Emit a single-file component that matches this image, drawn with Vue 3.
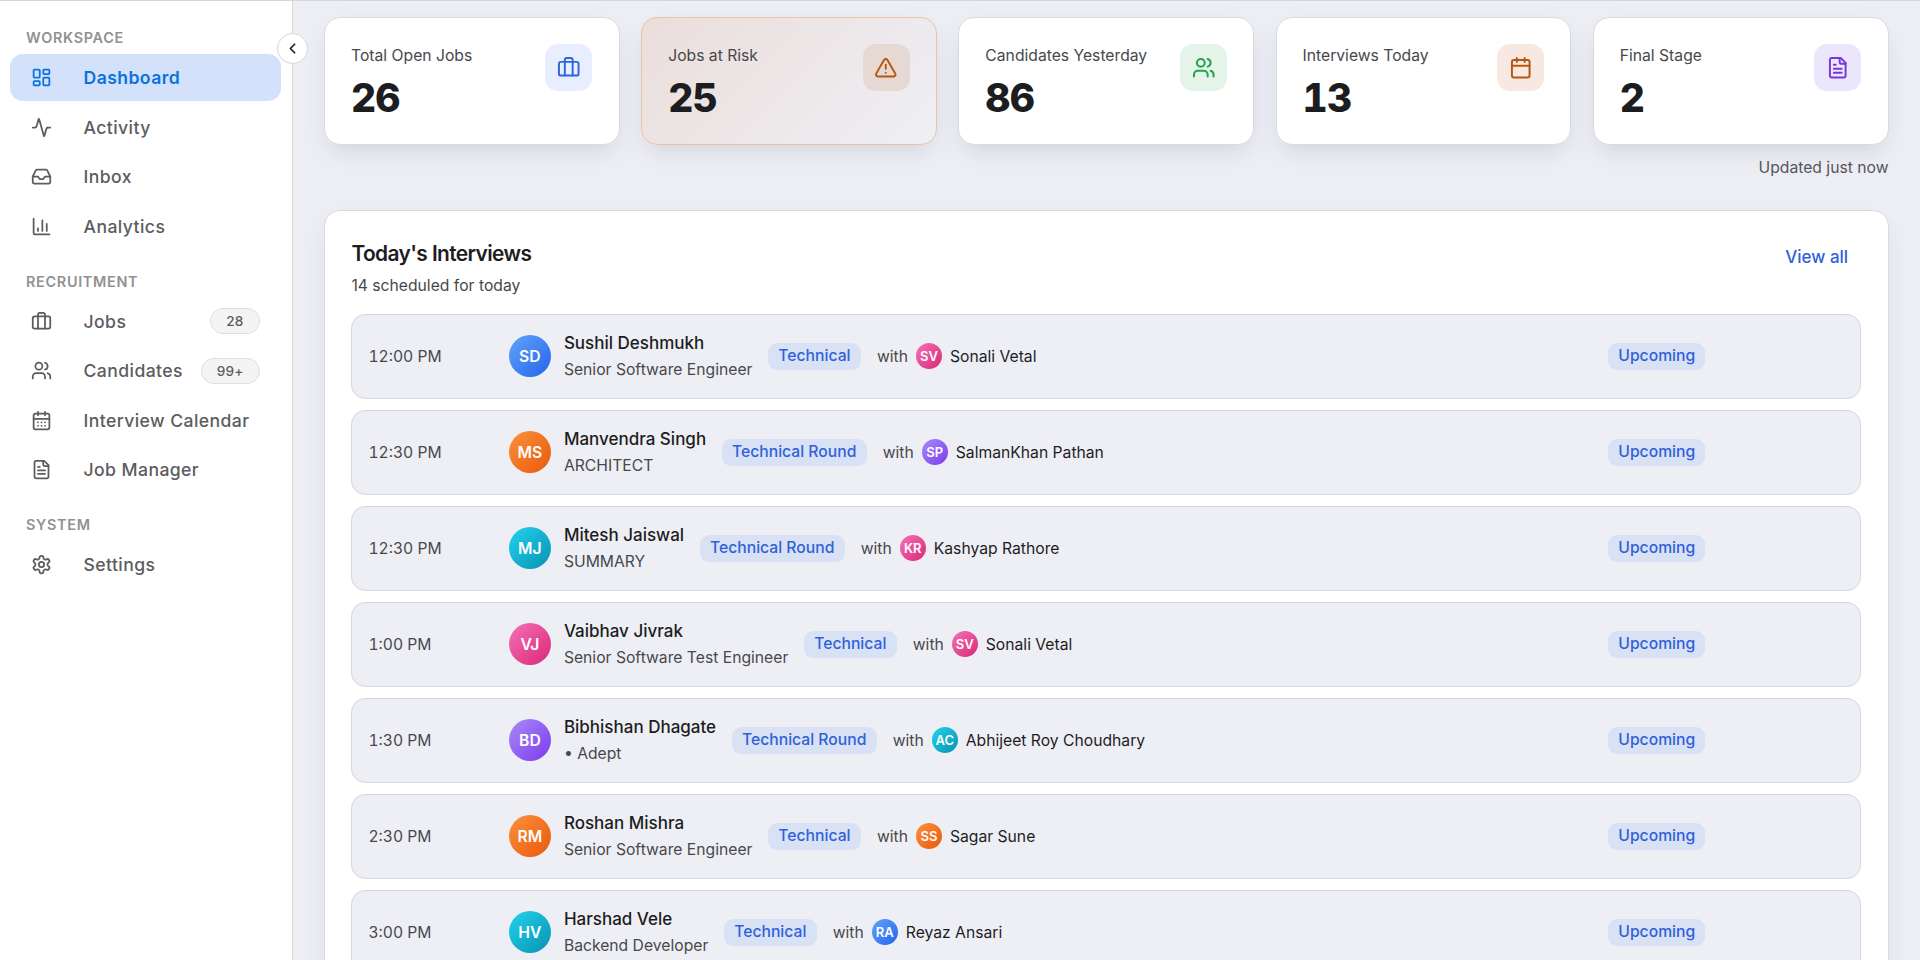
<template>
  <div class="app">
    <!-- Sidebar -->
    <aside class="sidebar">
      <nav>
        <section v-for="group in navGroups" :key="group.title" class="nav-group">
          <h3 class="nav-title">{{ group.title }}</h3>
          <a
            v-for="item in group.items"
            :key="item.label"
            class="nav-item"
            :class="{ active: item.active }"
          >
            <svg class="nav-icon" viewBox="0 0 24 24">
              <path v-for="d in icons[item.icon]" :key="d" :d="d" />
            </svg>
            <span class="nav-label">{{ item.label }}</span>
            <span v-if="item.count" class="nav-count">{{ item.count }}</span>
          </a>
        </section>
      </nav>
      <button class="collapse-btn">
        <svg viewBox="0 0 24 24"><path d="m15 18-6-6 6-6" /></svg>
      </button>
    </aside>

    <!-- Main content -->
    <main class="content">
      <div class="stats">
        <div
          v-for="stat in stats"
          :key="stat.label"
          class="stat-card"
          :class="{ risk: stat.risk }"
        >
          <div>
            <div class="stat-label">{{ stat.label }}</div>
            <div class="stat-value">{{ stat.value }}</div>
          </div>
          <div class="stat-icon" :class="stat.color">
            <svg viewBox="0 0 24 24">
              <path v-for="d in icons[stat.icon]" :key="d" :d="d" />
            </svg>
          </div>
        </div>
      </div>
      <div class="updated">Updated just now</div>

      <section class="panel">
        <header class="panel-header">
          <div>
            <h2 class="panel-title">Today's Interviews</h2>
            <p class="panel-sub">14 scheduled for today</p>
          </div>
          <a class="view-all">View all</a>
        </header>

        <div class="rows">
          <div v-for="row in interviews" :key="row.name" class="row">
            <div class="time">{{ row.time }}</div>
            <div class="details">
              <div class="avatar" :class="row.color">{{ row.initials }}</div>
              <div class="person">
                <div class="name">{{ row.name }}</div>
                <div class="role">{{ row.role }}</div>
              </div>
              <span class="tag">{{ row.round }}</span>
              <div class="with">
                <span>with</span>
                <span class="avatar small" :class="row.byColor">{{ row.byInitials }}</span>
                <span class="by-name">{{ row.by }}</span>
              </div>
            </div>
            <div class="status"><span class="tag">Upcoming</span></div>
          </div>
        </div>
      </section>
    </main>
  </div>
</template>

<script setup>
const users = [
  'M16 21v-2a4 4 0 0 0-4-4H6a4 4 0 0 0-4 4v2',
  'M5 7a4 4 0 1 0 8 0a4 4 0 1 0-8 0',
  'M22 21v-2a4 4 0 0 0-3-3.87',
  'M16 3.13a4 4 0 0 1 0 7.75',
];

const icons = {
  dashboard: [
    'M4 3h5a1 1 0 0 1 1 1v7a1 1 0 0 1-1 1H4a1 1 0 0 1-1-1V4a1 1 0 0 1 1-1z',
    'M15 3h5a1 1 0 0 1 1 1v3a1 1 0 0 1-1 1h-5a1 1 0 0 1-1-1V4a1 1 0 0 1 1-1z',
    'M15 12h5a1 1 0 0 1 1 1v7a1 1 0 0 1-1 1h-5a1 1 0 0 1-1-1v-7a1 1 0 0 1 1-1z',
    'M4 16h5a1 1 0 0 1 1 1v3a1 1 0 0 1-1 1H4a1 1 0 0 1-1-1v-3a1 1 0 0 1 1-1z',
  ],
  activity: [
    'M22 12h-2.48a2 2 0 0 0-1.93 1.46l-2.35 8.36a.25.25 0 0 1-.48 0L9.24 2.18a.25.25 0 0 0-.48 0l-2.35 8.36A2 2 0 0 1 4.49 12H2',
  ],
  inbox: [
    'M22 12h-6l-2 3h-4l-2-3H2',
    'M5.45 5.11 2 12v6a2 2 0 0 0 2 2h16a2 2 0 0 0 2-2v-6l-3.45-6.89A2 2 0 0 0 16.76 4H7.24a2 2 0 0 0-1.79 1.11z',
  ],
  chart: ['M3 3v16a2 2 0 0 0 2 2h16', 'M18 17V9', 'M13 17V5', 'M8 17v-3'],
  briefcase: [
    'M16 20V4a2 2 0 0 0-2-2h-4a2 2 0 0 0-2 2v16',
    'M4 6h16a2 2 0 0 1 2 2v10a2 2 0 0 1-2 2H4a2 2 0 0 1-2-2V8a2 2 0 0 1 2-2z',
  ],
  users,
  calendarDays: [
    'M8 2v4',
    'M16 2v4',
    'M5 4h14a2 2 0 0 1 2 2v14a2 2 0 0 1-2 2H5a2 2 0 0 1-2-2V6a2 2 0 0 1 2-2z',
    'M3 10h18',
    'M8 14h.01',
    'M12 14h.01',
    'M16 14h.01',
    'M8 18h.01',
    'M12 18h.01',
    'M16 18h.01',
  ],
  calendar: [
    'M8 2v4',
    'M16 2v4',
    'M5 4h14a2 2 0 0 1 2 2v14a2 2 0 0 1-2 2H5a2 2 0 0 1-2-2V6a2 2 0 0 1 2-2z',
    'M3 10h18',
  ],
  file: [
    'M15 2H6a2 2 0 0 0-2 2v16a2 2 0 0 0 2 2h12a2 2 0 0 0 2-2V7Z',
    'M14 2v4a2 2 0 0 0 2 2h4',
    'M10 9H8',
    'M16 13H8',
    'M16 17H8',
  ],
  alert: [
    'm21.73 18-8-14a2 2 0 0 0-3.48 0l-8 14A2 2 0 0 0 4 21h16a2 2 0 0 0 1.73-3',
    'M12 9v4',
    'M12 17h.01',
  ],
  settings: [
    'M12.22 2h-.44a2 2 0 0 0-2 2v.18a2 2 0 0 1-1 1.73l-.43.25a2 2 0 0 1-2 0l-.15-.08a2 2 0 0 0-2.73.73l-.22.38a2 2 0 0 0 .73 2.73l.15.1a2 2 0 0 1 1 1.72v.51a2 2 0 0 1-1 1.74l-.15.09a2 2 0 0 0-.73 2.73l.22.38a2 2 0 0 0 2.73.73l.15-.08a2 2 0 0 1 2 0l.43.25a2 2 0 0 1 1 1.73V20a2 2 0 0 0 2 2h.44a2 2 0 0 0 2-2v-.18a2 2 0 0 1 1-1.73l.43-.25a2 2 0 0 1 2 0l.15.08a2 2 0 0 0 2.73-.73l.22-.39a2 2 0 0 0-.73-2.73l-.15-.08a2 2 0 0 1-1-1.74v-.5a2 2 0 0 1 1-1.74l.15-.09a2 2 0 0 0 .73-2.73l-.22-.38a2 2 0 0 0-2.73-.73l-.15.08a2 2 0 0 1-2 0l-.43-.25a2 2 0 0 1-1-1.73V4a2 2 0 0 0-2-2z',
    'M9 12a3 3 0 1 0 6 0a3 3 0 1 0-6 0',
  ],
};

const navGroups = [
  {
    title: 'WORKSPACE',
    items: [
      { label: 'Dashboard', icon: 'dashboard', active: true },
      { label: 'Activity', icon: 'activity' },
      { label: 'Inbox', icon: 'inbox' },
      { label: 'Analytics', icon: 'chart' },
    ],
  },
  {
    title: 'RECRUITMENT',
    items: [
      { label: 'Jobs', icon: 'briefcase', count: '28' },
      { label: 'Candidates', icon: 'users', count: '99+' },
      { label: 'Interview Calendar', icon: 'calendarDays' },
      { label: 'Job Manager', icon: 'file' },
    ],
  },
  {
    title: 'SYSTEM',
    items: [{ label: 'Settings', icon: 'settings' }],
  },
];

const stats = [
  { label: 'Total Open Jobs', value: 26, icon: 'briefcase', color: 'blue' },
  { label: 'Jobs at Risk', value: 25, icon: 'alert', color: 'amber', risk: true },
  { label: 'Candidates Yesterday', value: 86, icon: 'users', color: 'green' },
  { label: 'Interviews Today', value: 13, icon: 'calendar', color: 'amber' },
  { label: 'Final Stage', value: 2, icon: 'file', color: 'purple' },
];

const interviews = [
  { time: '12:00 PM', initials: 'SD', color: 'c-blue', name: 'Sushil Deshmukh', role: 'Senior Software Engineer', round: 'Technical', byInitials: 'SV', byColor: 'c-pink', by: 'Sonali Vetal' },
  { time: '12:30 PM', initials: 'MS', color: 'c-orange', name: 'Manvendra Singh', role: 'ARCHITECT', round: 'Technical Round', byInitials: 'SP', byColor: 'c-purple', by: 'SalmanKhan Pathan' },
  { time: '12:30 PM', initials: 'MJ', color: 'c-cyan', name: 'Mitesh Jaiswal', role: 'SUMMARY', round: 'Technical Round', byInitials: 'KR', byColor: 'c-pink', by: 'Kashyap Rathore' },
  { time: '1:00 PM', initials: 'VJ', color: 'c-pink', name: 'Vaibhav Jivrak', role: 'Senior Software Test Engineer', round: 'Technical', byInitials: 'SV', byColor: 'c-pink', by: 'Sonali Vetal' },
  { time: '1:30 PM', initials: 'BD', color: 'c-purple', name: 'Bibhishan Dhagate', role: '• Adept', round: 'Technical Round', byInitials: 'AC', byColor: 'c-cyan', by: 'Abhijeet Roy Choudhary' },
  { time: '2:30 PM', initials: 'RM', color: 'c-orange', name: 'Roshan Mishra', role: 'Senior Software Engineer', round: 'Technical', byInitials: 'SS', byColor: 'c-orange', by: 'Sagar Sune' },
  { time: '3:00 PM', initials: 'HV', color: 'c-cyan', name: 'Harshad Vele', role: 'Backend Developer', round: 'Technical', byInitials: 'RA', byColor: 'c-blue', by: 'Reyaz Ansari' },
];
</script>

<style>
body {
  margin: 0;
  overflow: hidden;
}
</style>

<style scoped>
.app {
  box-sizing: border-box;
  display: flex;
  height: 960px;
  overflow: hidden;
  border-top: 1px solid #d6d6d9;
  background: #eeeff5;
  color: #1d1d1f;
  font-family: Inter, 'Liberation Sans', sans-serif;
}

.app * {
  box-sizing: border-box;
}

svg {
  display: block;
  fill: none;
  stroke: currentColor;
  stroke-width: 2;
  stroke-linecap: round;
  stroke-linejoin: round;
}

/* Sidebar */
.sidebar {
  position: relative;
  flex: none;
  width: 292.5px;
  padding: 25px 10.5px 0 10px;
  background: #fff;
  border-right: 1px solid #d6d6db;
}

.nav-title {
  margin: 0;
  height: 28px;
  padding-left: 16px;
  font-size: 14.4px;
  line-height: 24px;
  font-weight: 600;
  letter-spacing: 0.7px;
  color: #919194;
}

.nav-group + .nav-group {
  margin-top: 19.8px;
}

.nav-item {
  display: flex;
  align-items: center;
  height: 47px;
  margin-bottom: 2.6px;
  padding: 0 21.5px 0 21px;
  border-radius: 13px;
  font-size: 17.6px;
  font-weight: 500;
  letter-spacing: 0.42px;
  color: #5c5c5f;
}

.nav-item.active {
  background: #d3e1fb;
  color: #0a72de;
  font-weight: 600;
}

.nav-icon {
  flex: none;
  width: 21px;
  height: 21px;
  margin-right: 31.5px;
}

.nav-label {
  white-space: nowrap;
}

.nav-count {
  margin-left: auto;
  padding: 0 15px;
  height: 26px;
  border: 1px solid #dedee0;
  border-radius: 13px;
  background: #f4f4f5;
  font-size: 13.6px;
  line-height: 24px;
  letter-spacing: 0.2px;
}

.collapse-btn {
  position: absolute;
  top: 31.5px;
  right: -16px;
  display: flex;
  align-items: center;
  justify-content: center;
  width: 31px;
  height: 31px;
  padding: 0;
  border: 1px solid #d6d6db;
  border-radius: 50%;
  background: #fff;
  color: #1d1d1f;
}

.collapse-btn svg {
  width: 17px;
  height: 17px;
  stroke-width: 2.4;
}

/* Stats */
.content {
  flex: 1;
  min-width: 0;
  padding: 16px 31.5px 0 31.5px;
}

.stats {
  display: grid;
  grid-template-columns: repeat(5, 1fr);
  gap: 21.4px;
}

.stat-card {
  display: flex;
  justify-content: space-between;
  height: 128px;
  padding: 26px 26.3px 0 26px;
  border: 1px solid #d9dae1;
  border-radius: 16px;
  background: #fff;
  box-shadow: 0 10px 32px rgba(30, 35, 60, 0.06), 0 12px 18px -10px rgba(30, 35, 60, 0.09);
}

.stat-card.risk {
  border-color: #ebc3a6;
  background: linear-gradient(135deg, #ebdedb, #eeeff5);
}

.stat-label {
  font-size: 15.7px;
  line-height: 24.5px;
  color: #48484b;
  white-space: nowrap;
}

.stat-value {
  margin-top: 5.5px;
  font-size: 39px;
  line-height: 47px;
  font-weight: 800;
  letter-spacing: -0.8px;
  font-variant-numeric: tabular-nums;
}

.stat-icon {
  display: flex;
  flex: none;
  align-items: center;
  justify-content: center;
  width: 47px;
  height: 47px;
  border-radius: 13px;
}

.stat-icon svg {
  width: 23.5px;
  height: 23.5px;
}

.stat-icon.blue {
  background: #e9eefe;
  color: #2f66dc;
}

.stat-icon.amber {
  background: #f7e9e1;
  color: #b65710;
}

.risk .stat-icon.amber {
  background: #e6d8d3;
}

.stat-icon.green {
  background: #e5f4e9;
  color: #1fa24a;
}

.stat-icon.purple {
  background: #ece6fd;
  color: #7738d8;
}

.updated {
  margin-top: 9.5px;
  font-size: 15.7px;
  line-height: 25px;
  text-align: right;
  color: #55555a;
}

/* Interviews */
.panel {
  margin-top: 30.5px;
  height: 860px;
  padding: 28px 26.4px;
  border: 1px solid #d9dae1;
  border-radius: 16px;
  background: #fff;
  box-shadow: 0 10px 32px rgba(30, 35, 60, 0.06);
}

.panel-header {
  display: flex;
  justify-content: space-between;
  height: 74.6px;
}

.panel-title {
  margin: 0;
  font-size: 20.9px;
  line-height: 30px;
  font-weight: 600;
  letter-spacing: -0.6px;
}

.panel-sub {
  margin: 5px 0 0;
  font-size: 15.7px;
  line-height: 24.5px;
  color: #48484b;
}

.view-all {
  margin: 6px 13px 0 0;
  font-size: 17px;
  line-height: 24px;
  font-weight: 500;
  color: #2f62d9;
}

.rows {
  display: flex;
  flex-direction: column;
  gap: 11px;
}

.row {
  display: grid;
  grid-template-columns: 140.5px 1fr 236px;
  align-items: center;
  height: 85px;
  padding: 0 16px;
  border: 1px solid #d6d8e0;
  border-radius: 14px;
  background: #eeeff5;
  white-space: nowrap;
}

.time {
  font-size: 15.7px;
  font-variant-numeric: tabular-nums;
  color: #48484b;
}

.details {
  display: flex;
  align-items: center;
}

.avatar {
  display: flex;
  flex: none;
  align-items: center;
  justify-content: center;
  width: 42px;
  height: 42px;
  border-radius: 50%;
  color: #fff;
  font-size: 15.7px;
  font-weight: 600;
}

.avatar.small {
  width: 26.4px;
  height: 26.4px;
  margin: 0 7.8px;
  font-size: 13px;
}

.c-blue {
  background: linear-gradient(135deg, #60a5fa, #2563eb);
}

.c-orange {
  background: linear-gradient(135deg, #fb923c, #ea580c);
}

.c-cyan {
  background: linear-gradient(135deg, #22d3ee, #0891b2);
}

.c-pink {
  background: linear-gradient(135deg, #f472b6, #db2777);
}

.c-purple {
  background: linear-gradient(135deg, #a78bfa, #7c3aed);
}

.person {
  margin-left: 13px;
  padding-top: 1px;
}

.name {
  font-size: 17px;
  line-height: 26px;
  font-weight: 500;
}

.role {
  font-size: 15.7px;
  line-height: 27px;
  color: #48484b;
}

.tag {
  height: 27px;
  padding: 0 10.2px;
  border-radius: 9px;
  background: #d9e1f5;
  color: #2f62d9;
  font-size: 15.7px;
  line-height: 25.5px;
  font-weight: 500;
}

.details .tag {
  margin: 0 16.2px 0 15.7px;
}

.with {
  display: flex;
  align-items: center;
  font-size: 15.7px;
  color: #48484b;
}

.by-name {
  color: #1d1d1f;
}

.status {
  display: flex;
}
</style>
